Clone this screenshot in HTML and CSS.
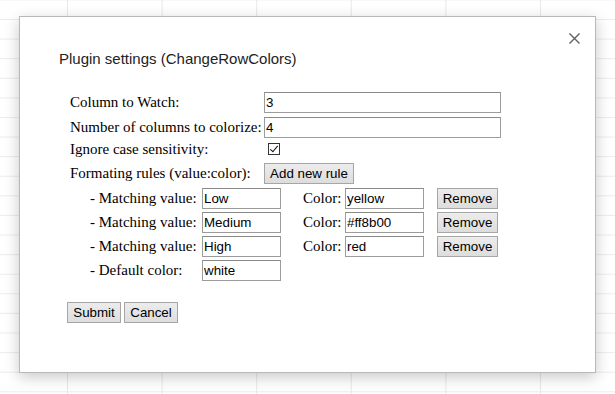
FILE: index.html
```html
<!DOCTYPE html>
<html lang="en">
<head>
    <meta charset="UTF-8">
    <meta name="viewport" content="width=device-width, initial-scale=1.0">
    <title>Plugin settings</title>
    <link rel="stylesheet" href="styles.css">
</head>
<body>
    <div class="dialog">
        <button class="close" aria-label="Close">
            <svg width="11" height="11" viewBox="0 0 11 11"><path d="M0.5 0.5 L10.5 10.5 M10.5 0.5 L0.5 10.5" stroke="#5f5f5f" stroke-width="1.4" fill="none"/></svg>
        </button>
        <div class="title">Plugin settings (ChangeRowColors)</div>
        <form class="form">
            <div class="row">
                <label class="label">Column to Watch:</label>
                <input class="field wide" type="text" value="3">
            </div>
            <div class="row">
                <label class="label">Number of columns to colorize:</label>
                <input class="field wide" type="text" value="4">
            </div>
            <div class="row check-row">
                <label class="label">Ignore case sensitivity:</label>
                <input class="check" type="checkbox" checked>
            </div>
            <div class="row">
                <label class="label">Formating rules (value:color):</label>
                <button type="button" class="btn add">Add new rule</button>
            </div>

            <div class="rule">
                <span class="rule-label">- Matching value:</span>
                <input class="field small" type="text" value="Low">
                <span class="color-label">Color:</span>
                <input class="field small" type="text" value="yellow">
                <button type="button" class="btn remove">Remove</button>
            </div>
            <div class="rule">
                <span class="rule-label">- Matching value:</span>
                <input class="field small" type="text" value="Medium">
                <span class="color-label">Color:</span>
                <input class="field small" type="text" value="#ff8b00">
                <button type="button" class="btn remove">Remove</button>
            </div>
            <div class="rule">
                <span class="rule-label">- Matching value:</span>
                <input class="field small" type="text" value="High">
                <span class="color-label">Color:</span>
                <input class="field small" type="text" value="red">
                <button type="button" class="btn remove">Remove</button>
            </div>
            <div class="rule">
                <span class="rule-label">- Default color:</span>
                <input class="field small" type="text" value="white">
            </div>

            <div class="actions">
                <button type="submit" class="btn">Submit</button>
                <button type="button" class="btn">Cancel</button>
            </div>
        </form>
    </div>
</body>
</html>
```

FILE: styles.css
```css
html, body { margin: 0; height: 394px; overflow: hidden; }
body {
    background-color: #fff;
    background-image:
        linear-gradient(to right, #e8e8e8 1px, transparent 1px),
        linear-gradient(to bottom, #ececec 1px, transparent 1px);
    background-size: 94.6px 19.6px;
    background-position: 67px -0.6px;
    padding-top: 16px;
    box-sizing: border-box;
}

.dialog {
    position: relative;
    margin-left: 19px;
    width: 577px;
    height: 357px;
    box-sizing: border-box;
    background: #fff;
    border: 1px solid #b8b8b8;
    box-shadow: 0 4px 14px rgba(0, 0, 0, 0.22);
}

.close {
    position: absolute;
    top: 16px;
    right: 15px;
    padding: 0;
    border: 0;
    background: none;
    width: 11px;
    height: 11px;
    line-height: 0;
    cursor: pointer;
}

.title {
    margin: 33px 0 0 39px;
    font: 15px/18px "Liberation Sans", Arial, sans-serif;
    color: #222;
}

.form {
    margin: 24px 0 0 50px;
    font: 15px "Liberation Serif", "Times New Roman", serif;
    color: #000;
}

.row { display: flex; align-items: center; height: 21px; line-height: 21px; margin-bottom: 4px; }
.row.check-row { height: 16px; line-height: 16px; margin-top: -1px; margin-bottom: 6px; }
.label { width: 194px; flex: none; white-space: nowrap; }

.field {
    box-sizing: border-box;
    height: 21px;
    margin: 0;
    padding: 1px 1px;
    border: 1px solid #9c9c9c;
    border-top-color: #8a8a8a;
    font: 13.33px "Liberation Sans", Arial, sans-serif;
    color: #000;
    background: #fff;
}
.field.wide { width: 237px; }
.field.small { width: 79px; }

.check {
    appearance: none;
    -webkit-appearance: none;
    position: relative;
    box-sizing: border-box;
    width: 12px;
    height: 12px;
    margin: 0 0 0 4px;
    border: 1px solid #333;
    background: #fff;
}
.check::after {
    content: "";
    position: absolute;
    left: 3px;
    top: 0px;
    width: 3px;
    height: 7px;
    border: solid #111;
    border-width: 0 1.3px 1.3px 0;
    transform: rotate(40deg);
}

.btn {
    box-sizing: border-box;
    height: 21px;
    margin: 0;
    padding: 0 6px;
    border: 1px solid #a6a6a6;
    background: linear-gradient(#ececec, #dddddd);
    font: 13.33px "Liberation Sans", Arial, sans-serif;
    color: #000;
    cursor: pointer;
}
.btn.add { width: 90px; padding: 0; }
.btn.remove { width: 61px; padding: 0; margin-left: 13px; }

.rule { display: flex; align-items: center; height: 21px; line-height: 21px; margin: 0 0 3px 20px; }
.rule-label { width: 112px; flex: none; white-space: nowrap; }
.color-label { width: 42px; margin-left: 22px; flex: none; }

.actions { display: flex; gap: 3px; margin: 21px 0 0 -3px; }
.actions .btn { width: 54px; padding: 0; }
```
